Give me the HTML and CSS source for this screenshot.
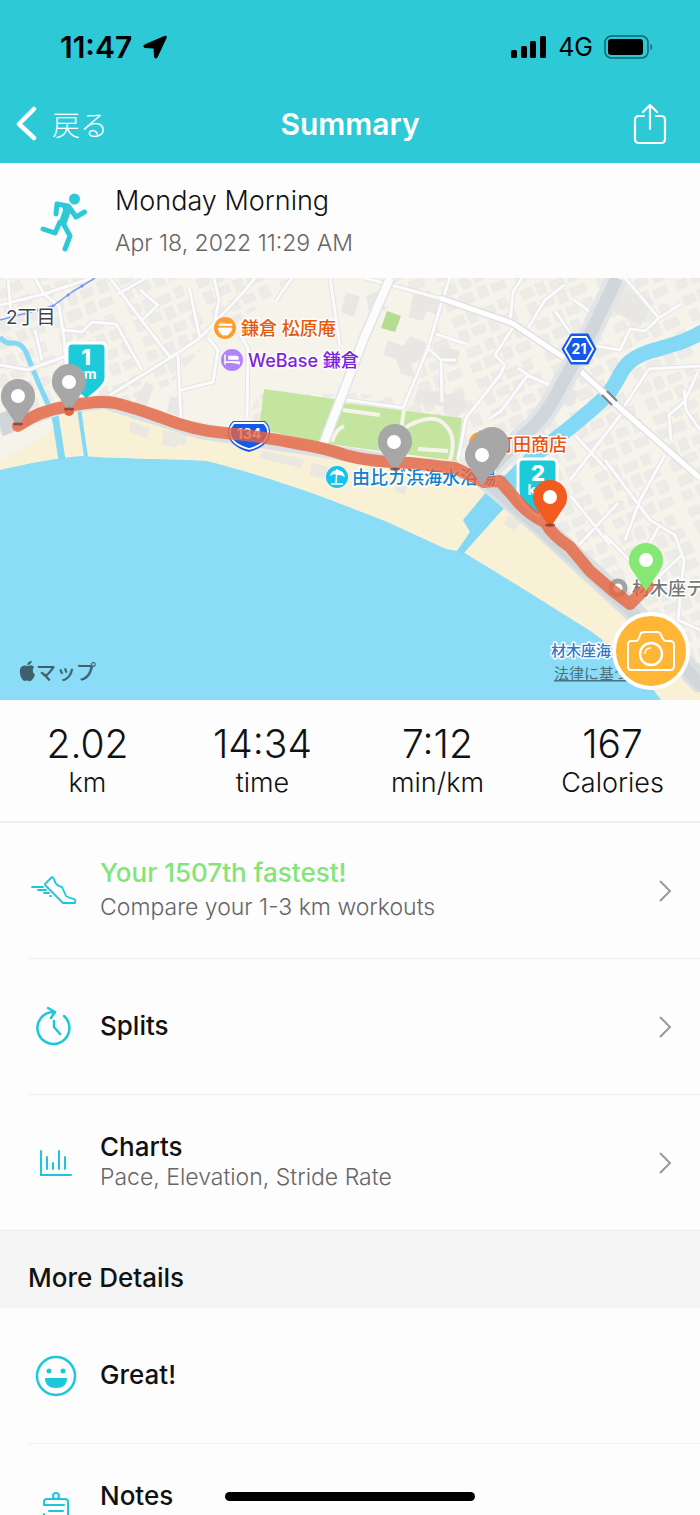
FILE: index.html
```html
<!DOCTYPE html>
<html lang="ja">
<head>
    <meta charset="UTF-8">
    <meta name="viewport" content="width=device-width, initial-scale=1.0">
    <title>Summary</title>
    <link rel="stylesheet" href="styles.css">
</head>
<body>
    <div class="screen">
        <header class="top">
            <div class="status">
                <div class="status-side">
                    <span class="clock">11:47</span>
                    <svg class="location" viewBox="0 0 24 24"><path d="M22.500 1 L1.500 10 Q0 11.500 1.500 12.500 L11 13 L11.500 22 Q12.500 24 14 22.500 L23.500 2 Z" fill="#000" stroke="#000" stroke-width="1" stroke-linejoin="round"/></svg>
                </div>
                <div class="status-side">
                    <svg class="signal" viewBox="0 0 36 22"><rect x="0" y="14" width="6" height="8" rx="1.500"/><rect x="10" y="10" width="6" height="12" rx="1.500"/><rect x="19" y="5" width="6" height="17" rx="1.500"/><rect x="29" y="0" width="6" height="22" rx="1.500"/></svg>
                    <span class="network">4G</span>
                    <svg class="battery" viewBox="0 0 49 24"><rect x="1" y="1" width="43" height="22" rx="6.500" fill="none" stroke="#15636b" stroke-width="1.500"/><rect x="4" y="4" width="35" height="16" rx="3" /><path d="M46.500 8.500 Q50 12 46.500 15.500 Z" fill="#15636b"/></svg>
                </div>
            </div>
            <nav class="nav">
                <button class="back" type="button">
                    <svg viewBox="0 0 22 36"><path d="M18 3 L3 18 L18 32" fill="none" stroke="#fff" stroke-width="4.500" stroke-linecap="round" stroke-linejoin="round"/></svg>
                    <span>戻る</span>
                </button>
                <h1 class="title">Summary</h1>
                <button class="share" type="button" aria-label="Share">
                    <svg viewBox="0 0 34 42"><path d="M11 13 H6 Q2 13 2 17 V36 Q2 40 6 40 H28 Q32 40 32 36 V17 Q32 13 28 13 H23 M17 26 V2 M10 9 L17 2 L24 9" fill="none" stroke="#fff" stroke-width="2.200" stroke-linecap="round" stroke-linejoin="round"/></svg>
                </button>
            </nav>
        </header>

        <section class="activity">
            <svg class="runner" viewBox="0 0 48 60"><circle cx="34.500" cy="7" r="5.500"/><path d="M16 22 L17 12 L28 14 M29 15 L36 25 L44.500 20 M20 30 L15 41 L3 37 M23 31 L30 44 L25 57" fill="none" stroke="#2dc9d7" stroke-width="5" stroke-linecap="round" stroke-linejoin="round"/><path d="M21 11 L28 12 Q32 14 31 19 L26 33 L18 33 L23 18 Z"/></svg>
            <div>
                <h2 class="activity-name">Monday Morning</h2>
                <p class="activity-date">Apr 18, 2022 11:29 AM</p>
            </div>
        </section>

        <section class="map">
            <svg class="map-canvas" viewBox="0 278 700 422" preserveAspectRatio="xMidYMid slice">
                <defs>
                    <pattern id="houses" width="74" height="66" patternUnits="userSpaceOnUse" patternTransform="rotate(-22)">
                        <g fill="#edebe7" stroke="#e4e2de" stroke-width="0.500">
                            <path d="M3 3h12v9h-12z M19 2h9v12h-9z M33 5h14v8h-14z M52 3h9v10h-9z M4 18h9v12h-9z M18 19h13v8h-13z M36 18h9v12h-9z M50 19h15v9h-15z M5 37h14v9h-14z M25 35h9v11h-9z M39 36h12v8h-12z M57 34h10v12h-10z M3 52h10v9h-10z M18 51h14v10h-14z M38 50h9v11h-9z M52 52h14v8h-14z"/>
                        </g>
                    </pattern>
                    <path id="pin" d="M0 0 L-12 -18 C-17 -24 -17 -28 -17 -31 A17 17 0 0 1 17 -31 C17 -28 17 -24 12 -18 Z"/>
                    <path id="streets" d="M110 278 L140 318 L170 357 M146 278 L118 294 M140 290 L158 305 L142 320 M189 287 L200 338 M214 278 L219 300 L213 330 M240 296 L200 338 L170 358 L110 395 M178 355 L181 420 M181 390 L213 382 L218 350 L208 338 M8 278 L12 325 M35 278 L44 294 L59 306 L64 338 L66 365 M0 305 L44 294 M44 294 L92 278 M64 330 L82 332 L92 322 L116 324 L142 370 M0 365 L28 370 L66 356 M35 330 L42 360 M330 278 L340 346 M240 335 L248 348 L247 418 M292 278 L276 301 M240 296 L255 278 M365 278 L450 301 M450 278 L442 301 L428 348 L403 408 M428 348 L441 360 L442 402 M436 334 L466 344 M441 360 L456 360 M347 400 L404 408 M510 321 L513 292 L522 278 M528 328 L545 300 L564 285 M514 326 L495 355 L505 365 L500 375 L466 418 L458 460 M518 368 L528 375 L501 411 L489 419 M527 375 L550 385 M555 311 L572 335 M574 300 L590 312 M625 278 L659 318 L681 304 M659 318 L645 331 L630 329 L620 350 L590 345 M622 413 L570 480 M575 435 L607 470 M605 460 L650 520 L675 535 L684 560 M665 455 L640 500 L625 540 M700 366 L649 369 L635 390 L620 413 M698 372 L684 402 L669 415 L671 440 M684 390 L686 410 L700 430 M570 495 L610 545 M605 535 L635 566 M579 545 L618 503 M643 555 L660 525 M655 580 L682 555 M684 560 L678 620 L700 630"/>
                </defs>

                <!-- land -->
                <rect x="0" y="278" width="700" height="422" fill="#f6f3eb"/>
                <rect x="0" y="278" width="700" height="422" fill="url(#houses)"/>
                <path d="M170 385 L205 345 L262 305 L290 278 L385 278 L345 395 L262 390 L240 430 L120 405 Z" fill="#f6f3eb"/>
                <path d="M345 320 L385 285 L440 300 L415 400 L350 392 Z" fill="#f6f3eb"/>
                <g fill="#e9e7e4">
                    <path d="M346 292l14 5-6 20-13-5z M366 296l12-5 8 18-16 8z M414 288l28 9-5 18-10-4-4 10-14-4z M388 340l15 6 7-10 16 7-4 16-11 5 4 14-14-4-5-15-13-4z M418 390l27 2-2 14-30-3z M444 396l17-6 6 16-10 12-14-6z M612 284l42 18-13 24-34-18z M146 382l8 4-10 28-13-4z M170 396l14 4-5 16-12-4z M440 346l20 5-4 14-18-3z M565 385l15 8-9 14-15-9z"/>
                </g>

                <!-- beach and sea -->
                <path d="M0 440 L30 425 L65 406 L130 405 L220 432 L300 450 L400 468 L490 485 L560 550 L700 686 V700 H0 Z" fill="#f8f1d5"/>
                <path d="M0 428 L22 418 L62 404 L50 432 L0 462 Z" fill="#f6f3eb"/>
                <g fill="#ebe8e2">
                    <path d="M130 421l20 7-3 10-18-6z M163 430l24 5-2 10-7-1-2 4-14-3z M262 450l42 9-3 9-42-10z M312 463l16 4-3 12-15-4z M395 483l12 3-2 9-10-3z M507 515l13 7-5 10-11-8z"/>
                </g>
                <path d="M0 470 C35 462 58 458 82 456 C120 459 175 459 206 461 C240 469 290 485 320 496 L385 521 L446 549 L463 552 L525 590 L592 632 L634 664 L661 700 H0 Z" fill="#8bdcf6"/>
                <g fill="none" stroke="#83d9f5">
                    <path d="M0 337 Q5 344 12 343 Q21 342 26 352 L38 382 L53 415 L58 430 L62 460" stroke-width="5"/>
                    <path d="M55 415 L62 460" stroke-width="7"/>
                    <path d="M79 408 L86 457" stroke-width="4"/>
                    <path d="M706 330 C682 344 671 345 648 352 C620 362 623 374 609 393 C583 420 553 440 534 456 L492 500" stroke-width="15"/>
                </g>
                <path d="M520 462 L488 490 L463 520 L470 532 L457 551 L463 554 L505 507 L535 470 Z" fill="#83d9f5"/>

                <!-- parks -->
                <path d="M264 389 L334 399 L344 403 L462 418 L457 461 L322 443 L259 429 Z" fill="#c3e5a0"/>
                <path d="M387 311 L401 316 L395 332 L381 328 Z" fill="#b5dc91"/>

                <!-- local streets -->
                <use href="#streets" fill="none" stroke="#e4e4e6" stroke-width="5" stroke-linejoin="round"/>
                <use href="#streets" fill="none" stroke="#fbfbfc" stroke-width="3" stroke-linejoin="round"/>
                <path d="M343 410 L380 415 M404 410 L401 430 Q430 412 443 423 Q458 435 450 460 M418 449 L448 451 M332 442 Q335 430 344 426" fill="none" stroke="#f6f3eb" stroke-width="4"/>

                <!-- main roads -->
                <g fill="none" stroke-linejoin="round">
                    <path d="M390 278 L364 338 L323 445" stroke="#e2e4e6" stroke-width="11"/>
                    <path d="M390 278 L364 338 L323 445" stroke="#fcfcfd" stroke-width="8"/>
                    <path d="M440 298 L512 323 L572 363 L620 408 L700 478" stroke="#e0e1e4" stroke-width="8"/>
                    <path d="M440 298 L512 323 L572 363 L620 408 L700 478" stroke="#fff" stroke-width="5"/>
                    <path d="M617 278 L592 330 L562 384 Q544 420 527 432 L488 471" stroke="#e2e5e8" stroke-width="22"/>
                    <path d="M617 278 L592 330 L562 384 Q544 420 527 432 L488 471" stroke="#d0d6da" stroke-width="13"/>
                    <path d="M0 430 L30 418 L65 406 L105 402 L200 432 L300 447 L400 463 L485 475" stroke="#dce0e3" stroke-width="14"/>
                    <path d="M0 425 L30 414" stroke="#d0d6da" stroke-width="22"/>
                    <path d="M480 474 L540 525 L630 608 L704 686" stroke="#dce0e3" stroke-width="22"/>
                    <path d="M480 476 L540 528 L630 610 L704 688" stroke="#d0d6da" stroke-width="12"/>
                    <path d="M607 391 L617 401 M602 395 L612 405" stroke="#7c7f80" stroke-width="2"/>
                    <path d="M0 320 L53 306 L72 292 L95 278" stroke="#7a9cf8" stroke-width="1.500"/>
                </g>
                <g fill="#6b90ff"><circle cx="26" cy="314" r="1.500"/><circle cx="38" cy="310" r="1.500"/><circle cx="53" cy="306" r="1.500"/><circle cx="68" cy="295" r="1.500"/><circle cx="82" cy="286" r="1.500"/></g>

                <!-- labels under the route -->
                <g class="poi" paint-order="stroke" stroke="#fff" stroke-width="3" stroke-linejoin="round">
                    <text class="district" x="6" y="324">2丁目</text>
                    <text x="241" y="335" fill="#e65a0d">鎌倉 松原庵</text>
                    <text x="248" y="367" fill="#7d22e0">WeBase 鎌倉</text>
                    <text x="352" y="484" fill="#1380cc">由比ガ浜海水浴場</text>
                    <text x="495" y="451" fill="#ed5310">町田商店</text>
                    <text x="632" y="595" fill="#797979">材木座テ</text>
                    <text class="beach" x="551" y="656">材木座海…</text>
                </g>
                <circle cx="225" cy="328" r="11" fill="#ff9c2e"/>
                <path d="M218 328h14q-1 5-4 6v1h-6v-1q-3-1-4-6z M219 324h13v1.500h-13z M221 322v4 M224 322v4" fill="#fff" stroke="#fff" stroke-width="0.800"/>
                <circle cx="232" cy="360" r="11" fill="#b183fa"/>
                <path d="M225 355v9 M225 362h14v2 M229 359h9v-1q0-1.500-2-1.500h-7z" fill="#fff" stroke="#fff" stroke-width="1.500" stroke-linecap="round"/>
                <circle cx="337" cy="477" r="11" fill="#13c3f2"/>
                <path d="M330 476q1-6 8-6q6 1 7 7l-5-2-3 0-3-1z" fill="#fff"/><path d="M337 469l-1 14 M331 484h12" stroke="#fff" stroke-width="1.500"/>
                <circle cx="480" cy="443" r="11" fill="#ff9c2e"/>
                <circle cx="618" cy="588" r="7" fill="#fff" stroke="#a2a2a2" stroke-width="5"/>

                <!-- road shields -->
                <path d="M233 421 H265 Q270 426 270 432 Q270 446 249 452 Q228 446 228 432 Q228 426 233 421 Z" fill="#1459ec"/>
                <path d="M234 423 H264 Q268 427 268 432 Q268 444 249 449 Q230 444 230 432 Q230 427 234 423 Z" fill="none" stroke="#fff" stroke-width="1.800"/>
                <text class="shield" x="249" y="439" text-anchor="middle">134</text>
                <path d="M571 334 H588 L596 349 L588 364 H571 L562 349 Z" fill="#1459ec" stroke="#1459ec" stroke-linejoin="round"/>
                <path d="M572 337 H586 L593 349 L586 361 H572 L565 349 Z" fill="none" stroke="#fff" stroke-width="1.800"/>
                <text class="shield" x="579" y="354" text-anchor="middle">21</text>

                <!-- kilometre flags -->
                <path d="M72 343 H101 Q106 343 106 348 V378 Q106 386 86 400 L67 384 V348 Q67 343 72 343 Z" fill="#1ccad9" stroke="#fff" stroke-width="3"/>
                <text class="flag" x="86" y="365" text-anchor="middle">1</text>
                <text class="flag-unit" x="86" y="379" text-anchor="middle">km</text>
                <path d="M523 459 H552 Q557 459 557 464 V496 Q557 505 538 516 Q518 503 518 491 V464 Q518 459 523 459 Z" fill="#1ccad9" stroke="#fff" stroke-width="3"/>
                <text class="flag" x="538" y="481" text-anchor="middle">2</text>
                <text class="flag-unit" x="538" y="495" text-anchor="middle">km</text>

                <!-- route -->
                <path d="M18 426 Q40 410 65 407 Q95 400 115 403 Q135 408 160 417 Q195 431 225 433 Q260 436 300 444 Q325 448 345 455 Q370 462 410 463 L455 468 L484 482 L500 481 L514 497 Q527 514 545 522 Q552 535 570 547 L590 571 L612 590 L630 604 L648 586" fill="none" stroke="#e76440" stroke-width="12" stroke-opacity="0.800" stroke-linecap="round" stroke-linejoin="round"/>
                <circle cx="69" cy="411" r="5" fill="#e76440"/>
                <g fill="#a7a7a7">
                    <use href="#pin" x="18" y="427"/><use href="#pin" x="69" y="412"/><use href="#pin" x="395" y="472"/>
                    <use href="#pin" x="492" y="475"/><use href="#pin" x="482" y="486"/>
                    <path d="M468 445 L480 430 L508 450 L495 468 Z"/>
                </g>
                <use href="#pin" x="550" y="528" fill="#f25a20"/>
                <use href="#pin" x="646" y="591" fill="#86e874"/>
                <g fill="#853b2c" fill-opacity="0.800"><ellipse cx="18" cy="424" rx="5" ry="1.500"/><ellipse cx="69" cy="409" rx="5" ry="1.500"/><ellipse cx="395" cy="469" rx="5" ry="1.500"/><ellipse cx="550" cy="525" rx="5" ry="1.500"/></g>
                <g fill="#fff"><circle cx="18" cy="396" r="7"/><circle cx="69" cy="382" r="7"/><circle cx="394" cy="442" r="7"/><circle cx="482" cy="455" r="7"/><circle cx="550" cy="497" r="7"/><circle cx="646" cy="560" r="7"/></g>

                <!-- map attribution -->
                <path d="M28 666 Q32 664 34 667 Q31 671 35 675 Q32 682 29 681 Q27 680 24 681 Q19 677 20 669 Q22 664 28 666 Z M27 665 Q28 661 32 661 Q31 665 27 665 Z" fill="#3f616e"/>
                <text class="attribution" x="36" y="680">マップ</text>
                <text class="legal" x="554" y="679">法律に基づく</text>
            </svg>
            <button class="camera" type="button" aria-label="Add photo">
                <svg viewBox="0 0 50 42"><path d="M5 11 H10 Q12 11 13 8 L14 5 Q15 2 18 2 H31 Q34 2 35 5 L37 9 Q38 11 40 11 H44 Q48 11 48 15 V36 Q48 40 44 40 H5 Q2 40 2 36 V15 Q2 11 5 11 Z" fill="none" stroke="#fff" stroke-width="2"/><circle cx="25" cy="24" r="11" fill="none" stroke="#fff" stroke-width="2.500"/><path d="M19 24 Q19 18 25 18" fill="none" stroke="#fff" stroke-width="1.500"/></svg>
            </button>
        </section>

        <dl class="stats">
            <div class="stat"><dt>km</dt><dd>2.02</dd></div>
            <div class="stat"><dt>time</dt><dd>14:34</dd></div>
            <div class="stat"><dt>min/km</dt><dd>7:12</dd></div>
            <div class="stat"><dt>Calories</dt><dd>167</dd></div>
        </dl>

        <ul class="list">
            <li><a class="row" href="#compare">
                <svg class="row-icon" viewBox="0 0 48 48"><path d="M14 17 L21 10 Q23 11 24 15 Q26 19 31 20 L35 29 Q38 31 43 32 Q45 33 44 36 H32 L14 18 Z M1 20 H12 M7 23 H15 M13 26 H18 M19 29 H20" fill="none" stroke="#1cc8d7" stroke-width="1.800" stroke-linecap="round" stroke-linejoin="round"/></svg>
                <span class="row-text spaced"><strong>Your 1507th fastest!</strong><small>Compare your 1-3 km workouts</small></span>
                <svg class="chevron" viewBox="0 0 14 24"><path d="M2 2 L12 12 L2 22"/></svg>
            </a></li>
            <li><a class="row" href="#splits">
                <svg class="row-icon" viewBox="0 0 48 48"><path d="M33 13 A16 16 0 1 1 22 9 M17 5 L24 9 L20 15 M23 18 V24 L29 31" fill="none" stroke="#1cc8d7" stroke-width="2.500" stroke-linecap="round" stroke-linejoin="round"/></svg>
                <span class="row-text"><strong>Splits</strong></span>
                <svg class="chevron" viewBox="0 0 14 24"><path d="M2 2 L12 12 L2 22"/></svg>
            </a></li>
            <li><a class="row" href="#charts">
                <svg class="row-icon" viewBox="0 0 48 48"><path d="M10 12 V36 H40 M16 18 V30 M22 24 V30 M28 12 V30 M34 18 V30" fill="none" stroke="#1cc8d7" stroke-width="2" stroke-linecap="round"/></svg>
                <span class="row-text"><strong>Charts</strong><small>Pace, Elevation, Stride Rate</small></span>
                <svg class="chevron" viewBox="0 0 14 24"><path d="M2 2 L12 12 L2 22"/></svg>
            </a></li>
        </ul>

        <h2 class="section-title">More Details</h2>

        <ul class="list">
            <li><div class="row">
                <svg class="row-icon" viewBox="0 0 48 48"><circle cx="25" cy="24" r="19" fill="none" stroke="#1cc8d7" stroke-width="2.500"/><circle cx="18" cy="19" r="2.500" fill="#1cc8d7"/><circle cx="32" cy="19" r="2.500" fill="#1cc8d7"/><path d="M14 26 H36 Q36 36 25 36 Q14 36 14 26 Z" fill="#1cc8d7"/></svg>
                <span class="row-text"><strong>Great!</strong></span>
            </div></li>
            <li><div class="row">
                <svg class="row-icon" viewBox="0 0 48 48"><path d="M37 46 V14 Q37 11 34 11 H16 Q13 11 13 14 V17 H33 M18 23 H32 M18 29 H32 M13 26 V46" fill="none" stroke="#1cc8d7" stroke-width="2" stroke-linecap="round"/><circle cx="25" cy="8" r="3" fill="none" stroke="#1cc8d7" stroke-width="2"/></svg>
                <span class="row-text"><strong>Notes</strong><small>Memories of the day</small></span>
            </div></li>
        </ul>
        <div class="home-bar"></div>
    </div>
</body>
</html>
```
FILE: styles.css
```css
* {
    box-sizing: border-box;
}
body {
    margin: 0;
    background-color: #fdfdfe;
    color: #111;
    font-family: Inter, "Noto Sans CJK JP", sans-serif;
}
h1, h2, p, dl, dd, ul {
    margin: 0;
    padding: 0;
}
button {
    padding: 0;
    border: none;
    background: none;
    color: #fff;
    font-family: inherit;
    cursor: pointer;
}
.screen {
    height: 100vh;
    overflow-y: auto;
    scrollbar-width: none;
}

/* Header */
.top {
    background-color: #2dc9d7;
    height: 163px;
    padding-top: 32px;
}
.status {
    display: flex;
    justify-content: space-between;
    padding: 0 47px 0 60px;
    height: 30px;
}
.status-side {
    display: flex;
    align-items: center;
    gap: 11px;
    color: #000;
}
.clock {
    font-size: 30px;
    font-weight: 600;
}
.network {
    font-size: 25px;
    font-weight: 400;
}
.location {
    width: 24px;
    height: 24px;
}
.signal {
    width: 36px;
    height: 22px;
}
.battery {
    width: 49px;
    height: 24px;
}
.nav {
    display: grid;
    grid-template-columns: 1fr auto 1fr;
    align-items: center;
    height: 60px;
    margin-top: 32px;
    padding: 0 16px;
    color: #fff;
}
.back {
    display: flex;
    align-items: center;
    gap: 14px;
    font-size: 28px;
    font-weight: 300;
}
.back svg {
    width: 22px;
    height: 36px;
}
.title {
    font-size: 30px;
    font-weight: 600;
}
.share {
    justify-self: end;
    margin-right: 17px;
}
.share svg {
    display: block;
    width: 34px;
    height: 42px;
}

/* Activity name */
.activity {
    display: flex;
    align-items: center;
    gap: 27px;
    height: 115px;
    padding: 2px 0 0 40px;
}
.runner {
    width: 48px;
    height: 60px;
    fill: #2dc9d7;
}
.activity-name {
    font-size: 27px;
    line-height: 42px;
    font-weight: 300;
}
.activity-date {
    font-size: 23px;
    line-height: 42px;
    font-weight: 300;
    color: #666;
}

/* Map */
.map {
    position: relative;
}
.map-canvas {
    display: block;
    width: 100%;
}
.poi {
    font-size: 18px;
    font-weight: 500;
}
.district {
    font-size: 19px;
    font-weight: 400;
    fill: #3d4349;
}
.beach {
    font-size: 15px;
    fill: #2e76c6;
}
.shield {
    font-size: 14px;
    font-weight: 700;
    fill: #fff;
}
.flag {
    font-size: 22px;
    font-weight: 800;
    fill: #fff;
}
.flag-unit {
    font-size: 14px;
    font-weight: 700;
    fill: #fff;
}
.attribution {
    font-family: "Noto Sans CJK JP", sans-serif;
    font-size: 20px;
    font-weight: 500;
    fill: #3f616e;
}
.legal {
    font-family: "Noto Sans CJK JP", sans-serif;
    font-size: 15px;
    fill: #4c7180;
    text-decoration: underline;
}
.camera {
    position: absolute;
    right: 10px;
    bottom: 10px;
    display: flex;
    align-items: center;
    justify-content: center;
    width: 78px;
    height: 78px;
    border: 4px solid #fff;
    border-radius: 50%;
    background-color: #ffb536;
}
.camera svg {
    width: 50px;
    height: 42px;
}

/* Stats */
.stats {
    display: grid;
    grid-template-columns: repeat(4, 1fr);
    height: 123px;
    padding-top: 20px;
    border-bottom: 2px solid #efeff4;
    text-align: center;
}
.stat {
    display: flex;
    flex-direction: column-reverse;
    justify-content: flex-end;
}
.stat dd {
    font-size: 39px;
    line-height: 48px;
    font-weight: 300;
}
.stat dt {
    font-size: 27px;
    line-height: 30px;
    font-weight: 300;
}

/* Rows */
.list {
    list-style: none;
}
.list li {
    margin-left: 28px;
    border-bottom: 1px solid #f0f0f2;
}
.list li:last-child {
    border-bottom: none;
}
.row {
    display: flex;
    align-items: center;
    height: 135px;
    padding: 0 28px 0 3px;
    color: #111;
    text-decoration: none;
}
.row-icon {
    flex: none;
    width: 48px;
    height: 48px;
    margin-right: 21px;
}
.row-text {
    flex: 1;
    display: flex;
    flex-direction: column;
    padding-bottom: 2px;
}
.row-text strong {
    font-size: 26px;
    line-height: 30px;
    font-weight: 500;
}
.row-text small {
    font-size: 23px;
    line-height: 30px;
    font-weight: 300;
    color: #666;
}
.spaced {
    gap: 4px;
}
.spaced strong {
    color: #83e575;
}
.chevron {
    width: 14px;
    height: 24px;
    fill: none;
    stroke: #999;
    stroke-width: 2;
}
.section-title {
    height: 78px;
    padding: 31px 28px 0;
    border-top: 1px solid #ececec;
    background-color: #f5f5f6;
    font-size: 26px;
    line-height: 32px;
    font-weight: 500;
}
.home-bar {
    position: fixed;
    bottom: 14px;
    left: 50%;
    width: 250px;
    height: 9px;
    border-radius: 5px;
    background-color: #000;
    transform: translateX(-50%);
}
```
